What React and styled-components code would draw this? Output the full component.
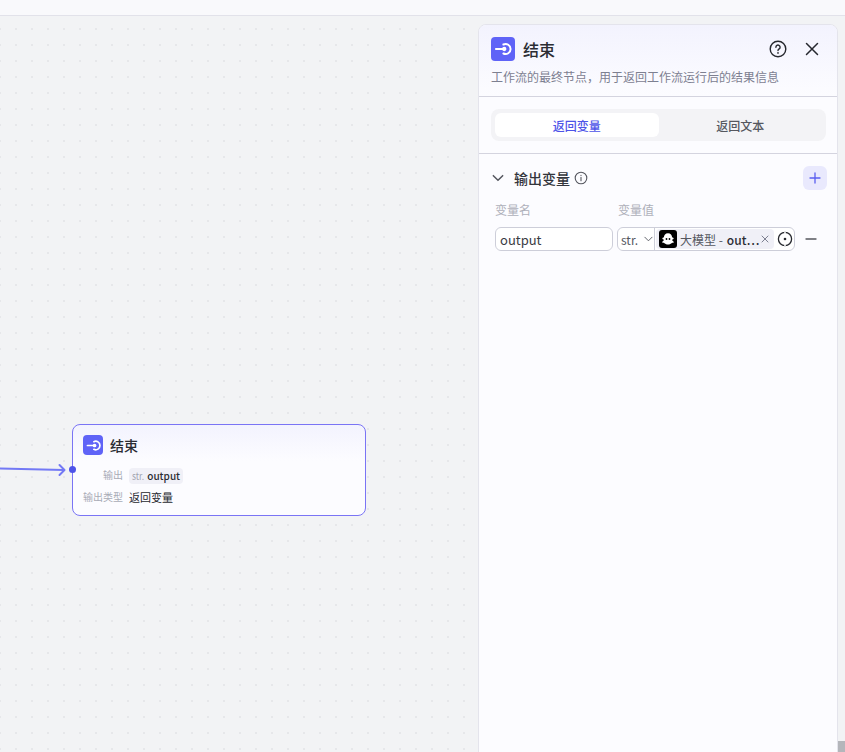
import React from "react";
import styled, { createGlobalStyle } from "styled-components";

const GlobalStyle = createGlobalStyle`
  html, body {
    margin: 0;
    height: 100%;
    overflow: hidden;
  }
  body {
    font-family: "Noto Sans CJK SC", "Noto Sans", sans-serif;
    color: #1c1f23;
  }
  #root {
    height: 100%;
  }
`;

const Page = styled.div`
  height: 752px;
  display: flex;
  flex-direction: column;
  background: #f2f3f5;
`;

const TopBar = styled.div`
  height: 15px;
  flex: none;
  background: #f9f9fc;
  border-bottom: 1px solid #e2e2ea;
`;

const Canvas = styled.div`
  position: relative;
  flex: 1;
  overflow: hidden;
  background-color: #f2f3f5;
  background-image: radial-gradient(circle, #e6e7ea 1px, transparent 1.2px);
  background-size: 16px 16px;
  background-position: 8px 5px;
`;

const Edge = styled.svg`
  position: absolute;
  left: 0;
  top: 444px;
`;

const Node = styled.div`
  position: absolute;
  left: 72px;
  top: 408px;
  width: 294px;
  height: 92px;
  box-sizing: border-box;
  padding: 10px 10px 0;
  border: 1px solid #7a74f5;
  border-radius: 8px;
  background: linear-gradient(180deg, #f3f3fe 0%, #fcfcff 40%, #fcfcff 100%);
`;

const Port = styled.span`
  position: absolute;
  left: -4px;
  top: 41px;
  width: 7px;
  height: 7px;
  border-radius: 50%;
  background: #4d53e8;
`;

const NodeHead = styled.div`
  display: flex;
  align-items: center;
  gap: 7px;
  height: 20px;
`;

const NodeTitle = styled.span`
  font-size: 14px;
  font-weight: 500;
  line-height: 20px;
  color: #2b2d33;
`;

const IconTile = styled.span`
  display: inline-flex;
  align-items: center;
  justify-content: center;
  flex: none;
  width: ${(p) => p.$size}px;
  height: ${(p) => p.$size}px;
  border-radius: ${(p) => p.$radius}px;
  background: #5f63f7;
`;

const NodeRows = styled.div`
  display: grid;
  grid-template-columns: 40px 1fr;
  column-gap: 6px;
  row-gap: 2px;
  margin-top: 10px;
  align-items: center;
`;

const NodeLabel = styled.span`
  font-size: 10px;
  line-height: 20px;
  color: #a8abb6;
  text-align: right;
  white-space: nowrap;
`;

const NodeValue = styled.span`
  font-size: 11px;
  line-height: 20px;
  color: #26282e;
`;

const OutputChip = styled.span`
  display: inline-flex;
  align-items: center;
  gap: 3px;
  height: 16px;
  padding: 0 3px;
  border-radius: 4px;
  background: #f0f0f7;
  font-size: 10px;
  font-weight: 500;
  color: #2b2d33;
`;

const StrTag = styled.span`
  font-size: 10px;
  font-weight: 400;
  color: #a0a3af;
  transform: scaleX(0.85);
  transform-origin: left center;
  margin-right: -2px;
`;

const Panel = styled.aside`
  position: absolute;
  left: 478px;
  top: 8px;
  width: 360px;
  bottom: -12px;
  box-sizing: border-box;
  border: 1px solid #e4e4ec;
  border-radius: 8px;
  background: #fcfcff;
  overflow: hidden;
`;

const PanelHead = styled.header`
  height: 72px;
  box-sizing: border-box;
  padding: 12px 12px 0;
  background: linear-gradient(180deg, #f3f3fe 0%, #fcfcff 100%);
  border-bottom: 1px solid #d4d4df;
`;

const TitleRow = styled.div`
  display: flex;
  align-items: center;
  height: 24px;
  gap: 8px;
`;

const PanelTitle = styled.h2`
  flex: 1;
  margin: 0;
  font-size: 16px;
  font-weight: 500;
  line-height: 24px;
  color: #2b2d33;
`;

const HeadActions = styled.div`
  display: flex;
  align-items: center;
  gap: 16px;
  margin-right: 4px;
`;

const PanelDesc = styled.p`
  margin: 7px 0 0;
  font-size: 12px;
  line-height: 18px;
  color: #7d8091;
`;

const TabsWrap = styled.div`
  padding: 12px 11px 12px 12px;
  border-bottom: 1px solid #d4d4df;
`;

const Tabs = styled.div`
  display: grid;
  grid-template-columns: 1fr 1fr;
  height: 32px;
  box-sizing: border-box;
  padding: 4px;
  border-radius: 8px;
  background: #f3f3f6;
`;

const Tab = styled.div`
  display: flex;
  align-items: center;
  justify-content: center;
  border-radius: 6px;
  font-size: 12px;
  font-weight: 500;
  background: ${(p) => (p.$active ? "#ffffff" : "transparent")};
  color: ${(p) => (p.$active ? "#4d53e8" : "#55575f")};
`;

const Section = styled.section`
  padding: 12px 10px 0 12px;
`;

const SectionHead = styled.div`
  display: flex;
  align-items: center;
  height: 24px;
`;

const SectionTitle = styled.span`
  margin-left: 9px;
  margin-right: 4px;
  font-size: 14px;
  font-weight: 500;
  color: #33353c;
`;

const AddButton = styled.button`
  display: flex;
  align-items: center;
  justify-content: center;
  width: 24px;
  height: 24px;
  margin-left: auto;
  padding: 0;
  border: 0;
  border-radius: 6px;
  background: #e9e9fd;
`;

const ColumnLabels = styled.div`
  display: flex;
  margin-top: 10px;
  padding-left: 4px;
`;

const ColumnLabel = styled.span`
  width: ${(p) => p.$width}px;
  font-size: 12px;
  line-height: 20px;
  color: #aeb0ba;
`;

const VarRow = styled.div`
  display: flex;
  align-items: center;
  gap: 4px;
  margin-top: 7px;
  padding-left: 4px;
`;

const NameInput = styled.input`
  width: 118px;
  height: 24px;
  box-sizing: border-box;
  padding: 2px 4px;
  border: 1px solid #cdced9;
  border-radius: 6px;
  background: #fff;
  font-family: inherit;
  font-size: 13px;
  color: #3a3c43;
  outline: none;
`;

const ValueGroup = styled.div`
  display: flex;
  align-items: center;
  width: 178px;
  height: 24px;
  box-sizing: border-box;
  border: 1px solid #cdced9;
  border-radius: 6px;
  background: #fff;
`;

const TypeSelect = styled.div`
  display: flex;
  align-items: center;
  width: 37px;
  height: 100%;
  flex: none;
  box-sizing: border-box;
  padding-left: 3px;
  gap: 5px;
  border-right: 1px solid #cdced9;
  font-size: 12px;
  color: #55575f;
`;

const RefTag = styled.div`
  display: flex;
  align-items: center;
  width: 118px;
  height: 20px;
  flex: none;
  margin-left: 1px;
  box-sizing: border-box;
  padding: 0 5px 0 3px;
  border-radius: 4px;
  background: #f0f0f7;
  font-size: 12px;
  color: #55575f;
  white-space: nowrap;
`;

const RefLogo = styled.span`
  display: inline-flex;
  align-items: center;
  justify-content: center;
  flex: none;
  width: 18px;
  height: 18px;
  margin-right: 3px;
  border-radius: 3px;
  background: #000;
`;

const RefField = styled.span`
  margin-left: 4px;
  font-weight: 500;
  color: #2b2d33;
`;

const RefClose = styled.span`
  display: inline-flex;
  margin-left: auto;
`;

const TargetSlot = styled.span`
  display: inline-flex;
  margin-left: 3px;
`;

const RemoveSlot = styled.span`
  display: inline-flex;
  margin-left: 6px;
`;

const ScrollThumb = styled.div`
  position: absolute;
  right: 0;
  bottom: 0;
  width: 7px;
  height: 11px;
  background: #b4b6bb;
`;

const EndIcon = ({ size }) => (
  <svg width={size} height={size} viewBox="0 0 24 24" fill="none">
    <path d="M12.5 6.6a6 6 0 1 1 0 10.8" stroke="#fff" strokeWidth="2.4" strokeLinecap="round" />
    <path d="M3.5 12h9" stroke="#fff" strokeWidth="2.4" strokeLinecap="round" />
    <circle cx="13.5" cy="12" r="2.6" fill="#fff" />
  </svg>
);

const HelpIcon = () => (
  <svg width="18" height="18" viewBox="0 0 18 18" fill="none" stroke="#26282e" strokeWidth="1.4" strokeLinecap="round">
    <circle cx="9" cy="9" r="7.8" />
    <path d="M6.9 7.2a2.1 2.1 0 1 1 3.3 1.7c-.7.5-1.2.9-1.2 1.7" />
    <path d="M9 12.9v.1" strokeWidth="1.7" />
  </svg>
);

const CloseIcon = () => (
  <svg width="18" height="18" viewBox="0 0 18 18" fill="none" stroke="#26282e" strokeWidth="1.5" strokeLinecap="round">
    <path d="M3.5 3.5l11 11M14.5 3.5l-11 11" />
  </svg>
);

const Chevron = ({ size, color, width }) => (
  <svg width={size} height={size} viewBox="0 0 12 12" fill="none" stroke={color} strokeWidth={width} strokeLinecap="round" strokeLinejoin="round">
    <path d="M2 4l4 4 4-4" />
  </svg>
);

const InfoIcon = () => (
  <svg width="14" height="14" viewBox="0 0 14 14" fill="none" stroke="#55575f" strokeWidth="1.1" strokeLinecap="round">
    <circle cx="7" cy="7" r="5.8" />
    <path d="M7 6.3v3.4M7 4.2v.2" />
  </svg>
);

const PlusIcon = () => (
  <svg width="12" height="12" viewBox="0 0 12 12" fill="none" stroke="#5a5ff0" strokeWidth="1.3" strokeLinecap="round">
    <path d="M6 1v10M1 6h10" />
  </svg>
);

const GhostLogo = () => (
  <svg width="16" height="16" viewBox="0 0 16 16">
    <path fill="#fff" d="M8 2.2c2.6 0 4 1.8 4.1 4.1.7.3 1.6.6 1.6 1.2 0 .5-.9.8-1.6 1.3.2.9 1 1.6 1.9 2.1-.4.8-1.3.8-2.1 1-.9.9-2.3 1.5-3.9 1.5s-3-.6-3.9-1.5c-.8-.2-1.7-.2-2.1-1 .9-.5 1.7-1.2 1.9-2.1-.7-.5-1.6-.8-1.6-1.3 0-.6.9-.9 1.6-1.2C4 4 5.400 2.200 8 2.200z" />
    <circle cx="6.500" cy="8" r="0.9" fill="#000" />
    <circle cx="9.500" cy="8" r="0.9" fill="#000" />
  </svg>
);

const SmallClose = () => (
  <svg width="8" height="8" viewBox="0 0 8 8" fill="none" stroke="#7d8091" strokeWidth="1" strokeLinecap="round">
    <path d="M1 1l6 6M7 1L1 7" />
  </svg>
);

const TargetIcon = () => (
  <svg width="16" height="16" viewBox="0 0 16 16" fill="none">
    <circle cx="8" cy="8" r="6.600" stroke="#26282e" strokeWidth="1.300" />
    <circle cx="8" cy="8" r="1.300" fill="#26282e" />
    <path d="M8 0.800v1.800M8 13.400v1.800" stroke="#fff" strokeWidth="1.500" />
  </svg>
);

const MinusIcon = () => (
  <svg width="12" height="12" viewBox="0 0 12 12" fill="none" stroke="#55575f" strokeWidth="1.300" strokeLinecap="round">
    <path d="M1 6h10" />
  </svg>
);

export default function App() {
  return (
    <Page>
      <GlobalStyle />
      <TopBar />
      <Canvas>
        <Edge width="72" height="20" viewBox="0 0 72 20" fill="none" stroke="#7379f5" strokeWidth="2" strokeLinecap="round" strokeLinejoin="round">
          <path d="M0 8.500C20 9 40 9.500 64 10" />
          <path d="M59.500 5l5 5-5 5" />
        </Edge>
        <Node>
          <Port />
          <NodeHead>
            <IconTile $size={20} $radius={4}>
              <EndIcon size={17} />
            </IconTile>
            <NodeTitle>结束</NodeTitle>
          </NodeHead>
          <NodeRows>
            <NodeLabel>输出</NodeLabel>
            <NodeValue>
              <OutputChip>
                <StrTag>str.</StrTag>
                output
              </OutputChip>
            </NodeValue>
            <NodeLabel>输出类型</NodeLabel>
            <NodeValue>返回变量</NodeValue>
          </NodeRows>
        </Node>
        <Panel>
          <PanelHead>
            <TitleRow>
              <IconTile $size={24} $radius={4}>
                <EndIcon size={20} />
              </IconTile>
              <PanelTitle>结束</PanelTitle>
              <HeadActions>
                <HelpIcon />
                <CloseIcon />
              </HeadActions>
            </TitleRow>
            <PanelDesc>工作流的最终节点，用于返回工作流运行后的结果信息</PanelDesc>
          </PanelHead>
          <TabsWrap>
            <Tabs>
              <Tab $active>返回变量</Tab>
              <Tab>返回文本</Tab>
            </Tabs>
          </TabsWrap>
          <Section>
            <SectionHead>
              <Chevron size={14} color="#55575f" width={1.3} />
              <SectionTitle>输出变量</SectionTitle>
              <InfoIcon />
              <AddButton>
                <PlusIcon />
              </AddButton>
            </SectionHead>
            <ColumnLabels>
              <ColumnLabel $width={123}>变量名</ColumnLabel>
              <ColumnLabel $width={60}>变量值</ColumnLabel>
            </ColumnLabels>
            <VarRow>
              <NameInput defaultValue="output" />
              <ValueGroup>
                <TypeSelect>
                  str.
                  <Chevron size={12} color="#55575f" width={1} />
                </TypeSelect>
                <RefTag>
                  <RefLogo>
                    <GhostLogo />
                  </RefLogo>
                  大模型 -<RefField>out⋯</RefField>
                  <RefClose>
                    <SmallClose />
                  </RefClose>
                </RefTag>
                <TargetSlot>
                  <TargetIcon />
                </TargetSlot>
              </ValueGroup>
              <RemoveSlot>
                <MinusIcon />
              </RemoveSlot>
            </VarRow>
          </Section>
        </Panel>
        <ScrollThumb />
      </Canvas>
    </Page>
  );
}
